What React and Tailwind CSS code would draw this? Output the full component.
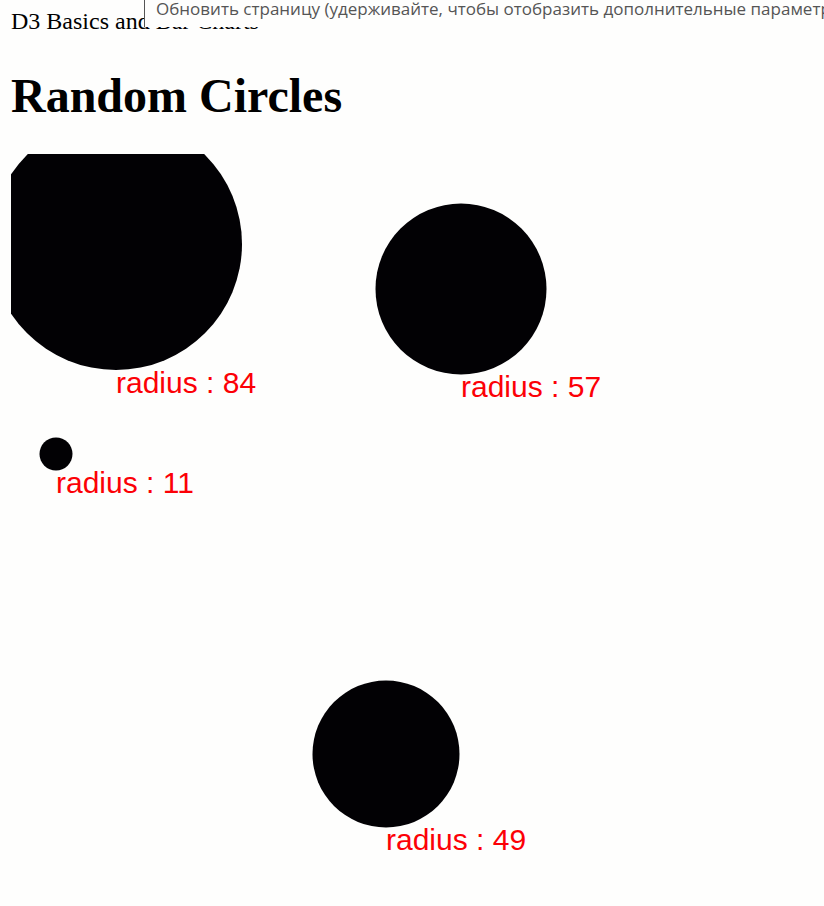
const SCALE = 1.5;

const circles = [
  { x: 70, y: 60, radius: 84 },
  { x: 300, y: 90, radius: 57 },
  { x: 30, y: 200, radius: 11 },
  { x: 250, y: 400, radius: 49 },
];

export default function App() {
  return (
    <div className="relative min-h-screen overflow-hidden bg-[#fefefd] px-[11px] pt-[7px] font-['Liberation_Serif',serif] text-black">
      <p className="text-2xl leading-7">D3 Basics and Bar Charts</p>
      <div
        role="tooltip"
        className="absolute left-36 top-0 h-[27px] whitespace-nowrap border-l border-[#555555] bg-[#fefefd] pl-[11px] font-['Open_Sans',sans-serif] text-[17px] font-[370] leading-[18px] text-[#555555]"
      >
        Обновить страницу (удерживайте, чтобы отобразить дополнительные параметр
      </div>
      <h1 className="mt-[33px] text-5xl font-bold leading-[56px]">Random Circles</h1>
      <svg className="mt-[30px] block h-[750px] w-full" aria-label="Random circles">
        {circles.map(({ x, y, radius }) => (
          <g key={radius}>
            <circle cx={x * SCALE} cy={y * SCALE} r={radius * SCALE} fill="#020104" />
            <text
              x={x * SCALE}
              y={Math.ceil((y + radius + 15) * SCALE)}
              className="fill-[#fc0006] font-['Liberation_Sans',sans-serif] text-[30px]"
            >
              {`radius : ${radius}`}
            </text>
          </g>
        ))}
      </svg>
    </div>
  );
}
